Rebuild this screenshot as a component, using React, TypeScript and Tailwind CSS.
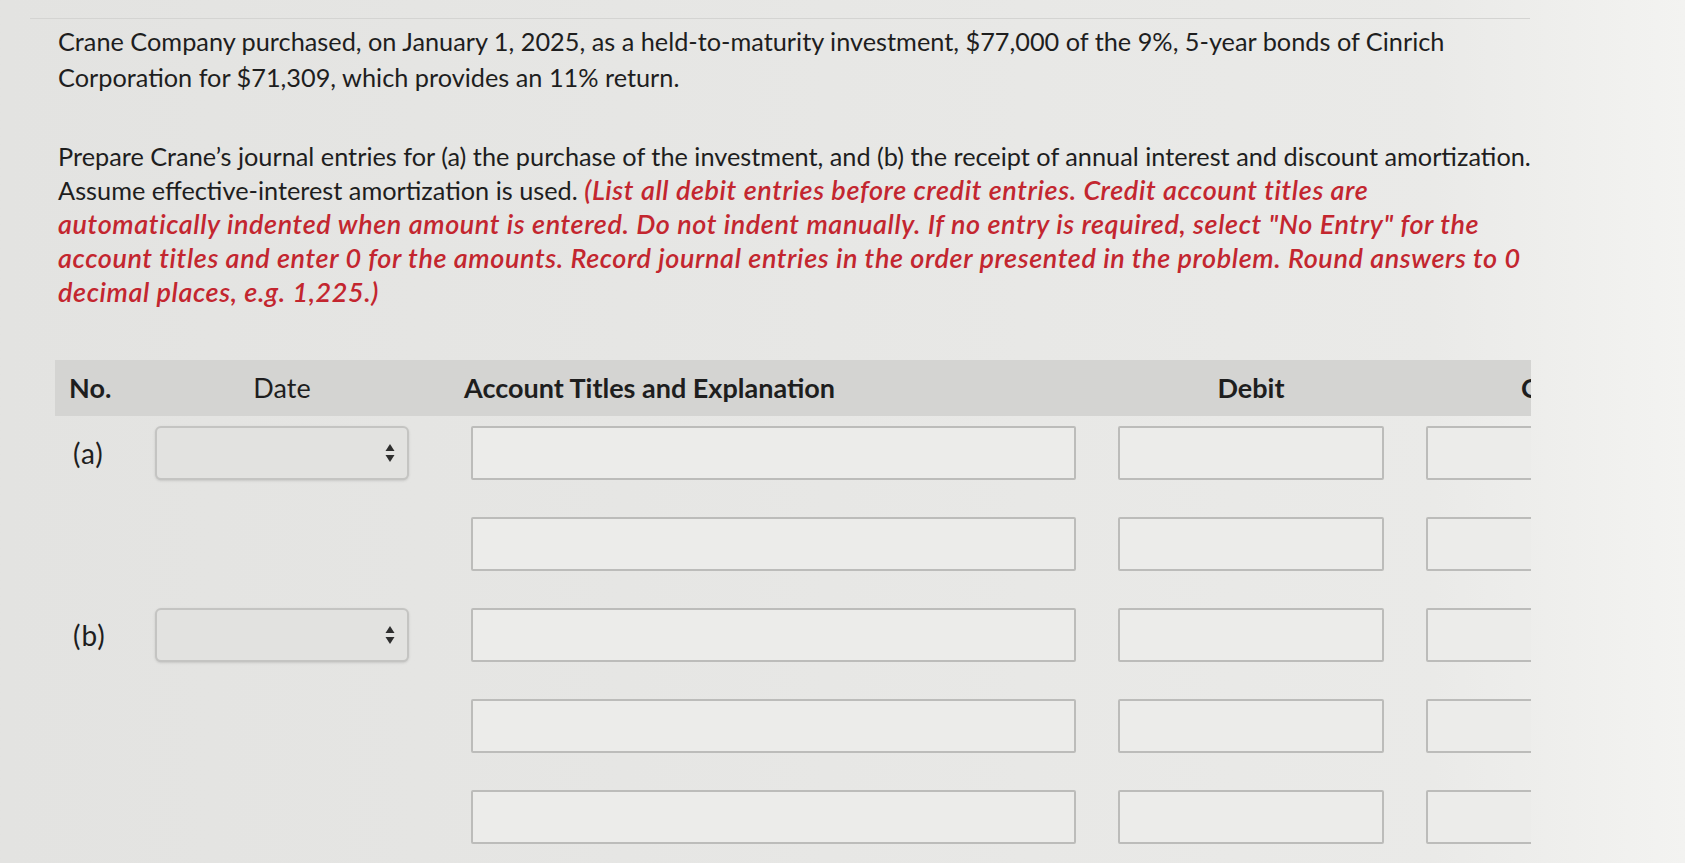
const rows = [
  { label: "(a)", date: true },
  { label: "", date: false },
  { label: "(b)", date: true },
  { label: "", date: false },
  { label: "", date: false },
];

const SelectArrows = () => (
  <svg width="10" height="22" viewBox="0 0 10 22" className="text-[#2e2e2e]">
    <path d="M5 2 L9.5 9 H0.5 Z" fill="currentColor" />
    <path d="M5 20 L9.5 13 H0.5 Z" fill="currentColor" />
  </svg>
);

const Field = ({ width }: { width: string }) => (
  <div className={`${width} h-[54px] shrink-0 border-2 border-[#bcbcba] bg-[#ececea] rounded-[2px]`} />
);

export default function App() {
  return (
    <div className="min-h-screen w-full overflow-hidden bg-linear-to-r from-[#e3e3e1] via-[#eaeae8] via-85% to-[#f3f3f1] font-['Lato','Open_Sans',sans-serif] text-[#1e1e1e]">
      <div className="ml-[30px] mt-[18px] w-[1500px] border-t border-[#d4d4d2]" />
      <div className="ml-[55px] w-[1476px] overflow-hidden">
        {/* Question text */}
        <div className="pl-[3px] pt-[4px] text-[25.3px] leading-[36px] whitespace-nowrap">
          <div>Crane Company purchased, on January 1, 2025, as a held-to-maturity investment, $77,000 of the 9%, 5-year bonds of Cinrich</div>
          <div>Corporation for $71,309, which provides an 11% return.</div>
        </div>
        <div className="pl-[3px] mt-[44px] text-[25.3px] leading-[34px] whitespace-nowrap">
          <div>Prepare Crane’s journal entries for (a) the purchase of the investment, and (b) the receipt of annual interest and discount amortization.</div>
          <div>
            Assume effective-interest amortization is used.{" "}
            <span className="italic font-semibold text-[27px] tracking-[0.6px] text-[#c3262f]">(List all debit entries before credit entries. Credit account titles are</span>
          </div>
          <div className="italic font-semibold text-[27px] tracking-[0.6px] text-[#c3262f]">automatically indented when amount is entered. Do not indent manually. If no entry is required, select "No Entry" for the</div>
          <div className="italic font-semibold text-[27px] tracking-[0.6px] text-[#c3262f]">account titles and enter 0 for the amounts. Record journal entries in the order presented in the problem. Round answers to 0</div>
          <div className="italic font-semibold text-[27px] tracking-[0.6px] text-[#c3262f]">decimal places, e.g. 1,225.)</div>
        </div>

        {/* Journal table */}
        <div className="mt-[51px] flex h-[56px] items-center bg-[#d4d4d2] text-[27px] whitespace-nowrap">
          <div className="w-[100px] shrink-0 pl-[14px] font-bold">No.</div>
          <div className="w-[254px] shrink-0 text-center">Date</div>
          <div className="ml-[55px] w-[612px] shrink-0 font-bold">Account Titles and Explanation</div>
          <div className="ml-[42px] w-[266px] shrink-0 text-center font-bold">Debit</div>
          <div className="ml-[42px] w-[264px] shrink-0 text-center font-bold">Credit</div>
        </div>

        <div className="mt-[9px] flex flex-col gap-[35px]">
          {rows.map((row, i) => (
            <div key={i} className="flex h-[56px] items-center">
              <div className="w-[100px] shrink-0 pl-[18px] text-[28px] tracking-[1px]">{row.label}</div>
              <div className="w-[254px] shrink-0">
                {row.date && (
                  <div className="flex h-[54px] items-center justify-end rounded-[6px] border-2 border-[#c4c4c2] bg-[#e2e2e0] pr-[12px] shadow-sm">
                    <SelectArrows />
                  </div>
                )}
              </div>
              <div className="ml-[62px]">
                <Field width="w-[605px]" />
              </div>
              <div className="ml-[42px]">
                <Field width="w-[266px]" />
              </div>
              <div className="ml-[42px]">
                <Field width="w-[264px]" />
              </div>
            </div>
          ))}
        </div>
      </div>
    </div>
  );
}
